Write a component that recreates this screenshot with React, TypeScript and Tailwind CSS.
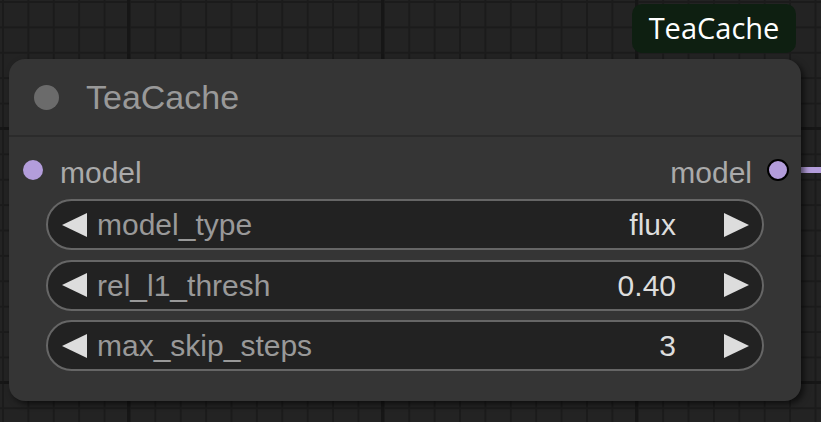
const widgets = [
  { name: "model_type", value: "flux" },
  { name: "rel_l1_thresh", value: "0.40" },
  { name: "max_skip_steps", value: "3" },
];

function Arrow({ dir }: { dir: "left" | "right" }) {
  return (
    <svg width="25" height="24" viewBox="0 0 25 24" className="shrink-0">
      <polygon
        points={dir === "left" ? "25,0 25,24 0,12" : "0,0 0,24 25,12"}
        fill="#dddddd"
      />
    </svg>
  );
}

function Widget({ name, value }: { name: string; value: string }) {
  return (
    <div className="flex h-[51px] items-center rounded-full border-2 border-[#666666] bg-[#222222] pl-[14px] pr-[13px]">
      <Arrow dir="left" />
      <span className="ml-[10px] flex-1 text-[30px] text-[#999999]">{name}</span>
      <span className="text-[30px] text-[#dddddd]">{value}</span>
      <div className="ml-[48px]">
        <Arrow dir="right" />
      </div>
    </div>
  );
}

export default function App() {
  return (
    <div className="relative h-[422px] w-[821px] overflow-hidden bg-[#232323] font-['Liberation_Sans',Arial,sans-serif] bg-[linear-gradient(to_right,#161616_3px,transparent_3px),linear-gradient(to_bottom,#161616_3px,transparent_3px),linear-gradient(to_right,#1b1b1b_2px,transparent_2px),linear-gradient(to_bottom,#1b1b1b_2px,transparent_2px)] bg-[size:254px_254px,254px_254px,25.4px_25.4px,25.4px_25.4px] bg-[position:127px_127px,127px_127px,2px_1px,2px_1px]">
      {/* outgoing link */}
      <div className="absolute left-[790px] top-[167px] h-[6px] w-[40px] bg-[#b39ddb]" />

      {/* title badge */}
      <div className="absolute left-[632px] top-[4px] flex h-[49px] w-[164px] items-center justify-center rounded-[10px] bg-[#0e1f11] pb-[2px] font-['Open_Sans','Noto_Sans',sans-serif] text-[29px] text-white">
        TeaCache
      </div>

      {/* node */}
      <div className="absolute left-[9px] top-[59px] w-[792px] rounded-[16px] bg-[#353535] shadow-[3px_3px_6px_rgba(0,0,0,0.6)]">
        <div className="flex h-[78px] items-center border-b-2 border-[#2b2b2b] pl-[25px]">
          <div className="h-[25px] w-[25px] rounded-full bg-[#6b6b6b]" />
          <span className="ml-[27px] text-[34px] text-[#999999]">TeaCache</span>
        </div>

        <div className="px-[37px] pb-[30px] pt-[13px]">
          <div className="-mx-[37px] flex h-[40px] items-center pl-[14px] pr-[12px]">
            <div className="h-[20px] w-[20px] rounded-full bg-[#b39ddb]" />
            <span className="ml-[17px] flex-1 pt-[4px] text-[30px] text-[#aaaaaa]">model</span>
            <span className="pt-[4px] text-[30px] text-[#aaaaaa]">model</span>
            <div className="ml-[15px] h-[22px] w-[22px] rounded-full border-2 border-black bg-[#b39ddb]" />
          </div>

          <div className="mt-[9px] flex flex-col gap-[9.5px]">
            {widgets.map((w) => (
              <Widget key={w.name} name={w.name} value={w.value} />
            ))}
          </div>
        </div>
      </div>
    </div>
  );
}
